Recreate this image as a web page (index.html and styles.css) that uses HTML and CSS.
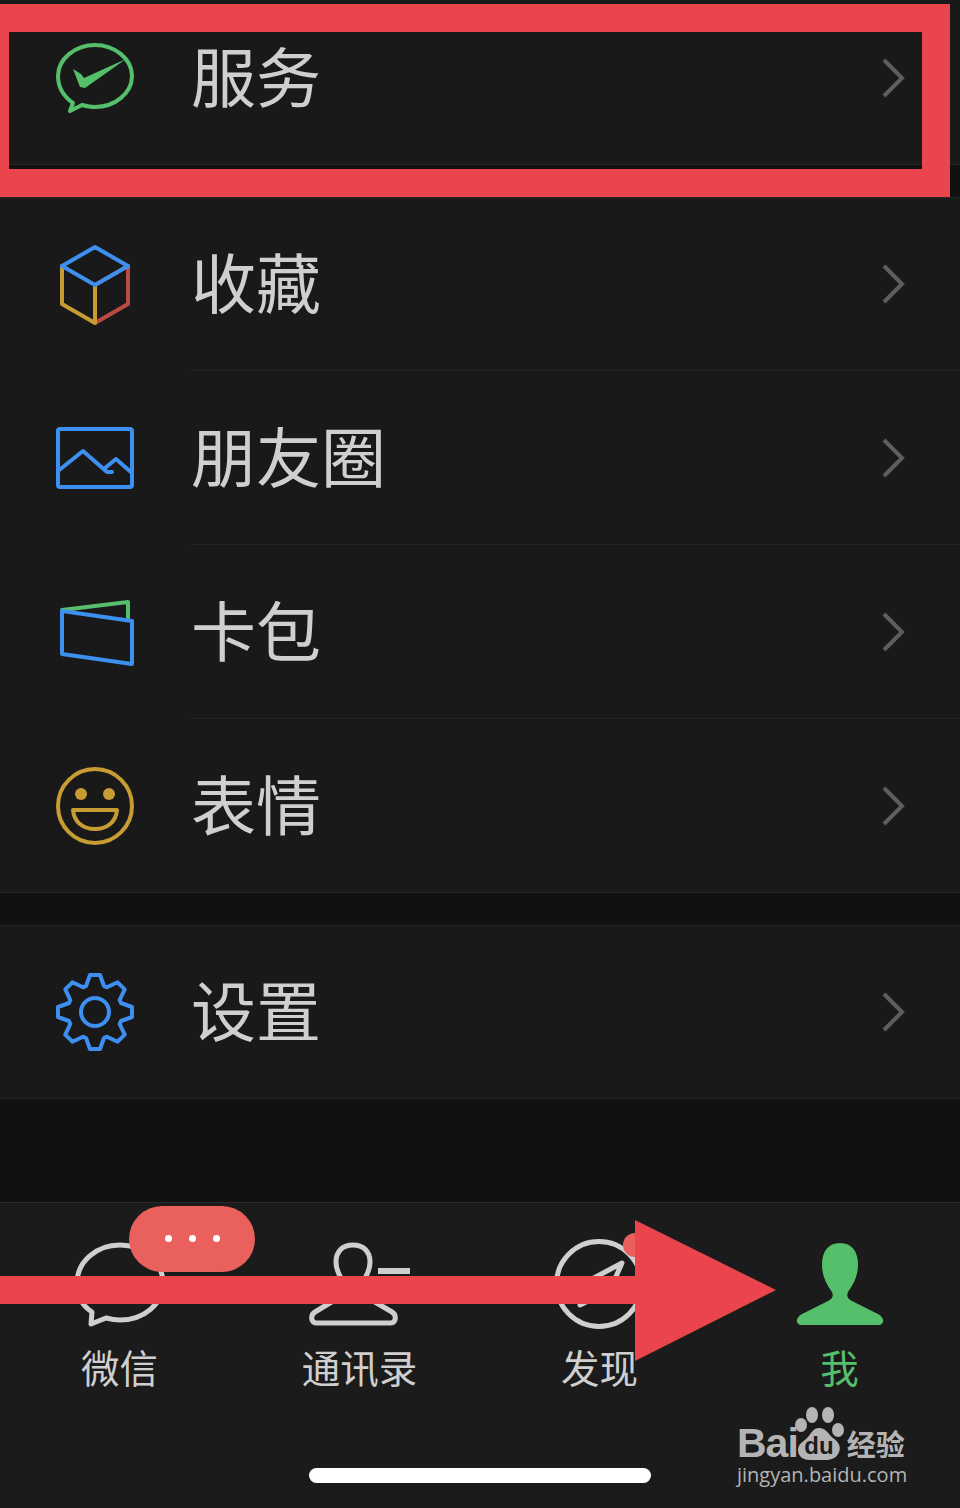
FILE: index.html
```html
<!DOCTYPE html>
<html lang="zh-CN">
<head>
  <meta charset="UTF-8">
  <title>我</title>
  <link rel="stylesheet" href="styles.css">
</head>
<body>

  <div class="screen">
    <div class="list">

      <div class="group first">
        <div class="row">
          <svg class="row-icon" viewBox="56 39 78 78">
            <path class="green-line" d="M73 103C63 96 58 87 58 76C58 59 75 45 95 45C115 45 132 59 132 76C132 93 115 107 95 107C90 107 86 106 82 105L70 111Z"/>
            <path class="green-fill" d="M73 69L81 74L84 78L126 59L85 88L80 87Z"/>
          </svg>
          <div class="row-body">
            <span class="row-text">服务</span>
            <svg class="chevron" viewBox="0 0 24 42"><path d="M2 3L20 21L2 39"/></svg>
          </div>
        </div>
      </div>

      <div class="group">
        <div class="row">
          <svg class="row-icon" viewBox="56 245 78 78">
            <path class="cube" stroke="#bb4a44" d="M95 285L128 266V304L95 323"/>
            <path class="cube" stroke="#c69c33" d="M62 266V304L95 323V285"/>
            <path class="cube" stroke="#3d8ff0" d="M62 266L95 247L128 266L95 285Z"/>
          </svg>
          <div class="row-body">
            <span class="row-text">收藏</span>
            <svg class="chevron" viewBox="0 0 24 42"><path d="M2 3L20 21L2 39"/></svg>
          </div>
        </div>
        <div class="row">
          <svg class="row-icon" viewBox="56 419 78 78">
            <path class="blue-line" d="M60 429H130Q132 429 132 431V485Q132 487 130 487H60Q58 487 58 485V431Q58 429 60 429Z"/>
            <path class="blue-line" d="M58 471L83 451L107 472H112M105 468L116 459L132 473"/>
          </svg>
          <div class="row-body">
            <span class="row-text">朋友圈</span>
            <svg class="chevron" viewBox="0 0 24 42"><path d="M2 3L20 21L2 39"/></svg>
          </div>
        </div>
        <div class="row">
          <svg class="row-icon" viewBox="56 593 78 78">
            <path class="cube" stroke="#55bf6c" d="M62 610L128 602V618"/>
            <path class="blue-line" d="M62 611L132 621V664L62 654Z"/>
          </svg>
          <div class="row-body">
            <span class="row-text">卡包</span>
            <svg class="chevron" viewBox="0 0 24 42"><path d="M2 3L20 21L2 39"/></svg>
          </div>
        </div>
        <div class="row">
          <svg class="row-icon" viewBox="56 767 78 78">
            <circle class="yellow-line" cx="95" cy="806" r="37"/>
            <circle class="yellow-fill" cx="81" cy="794" r="6"/>
            <circle class="yellow-fill" cx="109" cy="794" r="6"/>
            <path class="yellow-line" d="M73 810H117C116 822 107 829 95 829C83 829 74 822 73 810Z"/>
          </svg>
          <div class="row-body last">
            <span class="row-text">表情</span>
            <svg class="chevron" viewBox="0 0 24 42"><path d="M2 3L20 21L2 39"/></svg>
          </div>
        </div>
      </div>

      <div class="group">
        <div class="row">
          <svg class="row-icon" viewBox="-39 -39 78 78">
            <path class="blue-line" d="M-9 -26L-5 -37H5L9 -26L12 -24.7L22.6 -29.7L29.7 -22.6L24.7 -12L26 -9L37 -5V5L26 9L24.7 12L29.7 22.6L22.6 29.7L12 24.7L9 26L5 37H-5L-9 26L-12 24.7L-22.6 29.7L-29.7 22.6L-24.7 12L-26 9L-37 5V-5L-26 -9L-24.7 -12L-29.7 -22.6L-22.6 -29.7L-12 -24.7Z"/>
            <circle class="blue-line" cx="0" cy="0" r="14"/>
          </svg>
          <div class="row-body last">
            <span class="row-text">设置</span>
            <svg class="chevron" viewBox="0 0 24 42"><path d="M2 3L20 21L2 39"/></svg>
          </div>
        </div>
      </div>

    </div>

    <div class="tabbar">
      <div class="tabs">
        <div class="tab">
          <svg class="tab-icon" viewBox="60 1243 120 84">
            <path class="tab-line" d="M92 1312C81 1305 77 1295 77 1283C77 1262 96 1245 120 1245C144 1245 163 1262 163 1283C163 1304 144 1320 120 1320C115 1320 110 1319 106 1318L91 1324Z"/>
          </svg>
          <span class="tab-text">微信</span>
          <div class="more"><i></i><i></i><i></i></div>
        </div>
        <div class="tab">
          <svg class="tab-icon" viewBox="300 1243 120 84">
            <path class="tab-line" d="M343 1281C338 1274 336 1268 336 1262C336 1251 343 1245 353 1245C363 1245 370 1251 370 1262C370 1268 368 1274 363 1281V1295L392 1312C397 1315 396 1323 391 1323H316C311 1323 310 1315 315 1312L343 1295Z"/>
            <path class="tab-bar-mark" d="M378 1268H410V1274H378Z"/>
          </svg>
          <span class="tab-text">通讯录</span>
        </div>
        <div class="tab">
          <svg class="tab-icon" viewBox="540 1243 120 84">
            <circle class="tab-line" cx="599" cy="1284" r="42.5"/>
            <path class="tab-line" d="M622 1263L590 1280L580 1305L610 1290Z"/>
          </svg>
          <span class="tab-text">发现</span>
          <div class="dot"></div>
        </div>
        <div class="tab active">
          <svg class="tab-icon" viewBox="780 1243 120 84">
            <path class="green-fill" d="M840 1243C828 1243 822 1252 822 1264C822 1278 828 1286 832 1292C834 1296 832 1299 828 1301L802 1314C795 1318 795 1325 802 1325H878C885 1325 885 1318 878 1314L852 1301C848 1299 846 1296 848 1292C852 1286 858 1278 858 1264C858 1252 852 1243 840 1243Z"/>
          </svg>
          <span class="tab-text">我</span>
        </div>
      </div>
      <div class="home-bar"></div>

      <div class="watermark">
        <div class="wm-top">
          <span class="wm-bai">Bai</span>
          <svg class="wm-paw" viewBox="0 0 50 56">
            <ellipse cx="6" cy="19" rx="6" ry="7"/>
            <ellipse cx="17" cy="9" rx="6" ry="8"/>
            <ellipse cx="33" cy="9" rx="6" ry="8"/>
            <ellipse cx="43" cy="24" rx="6" ry="7"/>
            <path d="M24 22C31 22 33 28 38 32C44 36 46 41 44 46C42 52 36 54 31 54H15C9 54 3 51 3 44C3 38 8 36 12 32C16 28 18 22 24 22Z"/>
            <text x="24" y="48" text-anchor="middle">du</text>
          </svg>
          <span class="wm-name">经验</span>
        </div>
        <div class="wm-url">jingyan.baidu.com</div>
      </div>
    </div>

    <!-- red marks drawn on top of the screenshot -->
    <div class="mark-frame"></div>
    <svg class="mark-arrow" viewBox="0 0 776 141">
      <path d="M0 56H635V0L776 70L635 141V84H0Z"/>
    </svg>
  </div>

</body>
</html>
```

FILE: styles.css
```css
* {
  box-sizing: border-box;
}

body {
  margin: 0;
  background: #111;
  font-family: "Noto Sans CJK SC", "Liberation Sans", sans-serif;
}

.screen {
  position: relative;
  width: 960px;
  height: 1508px;
  overflow: hidden;
  background: #111;
  display: flex;
  flex-direction: column;
}

.list {
  flex: 1;
}

.group {
  background: #191919;
  margin-bottom: 32px;
  box-shadow: inset 0 1px 0 #242424, inset 0 -1px 0 #242424;
}

.group.first {
  margin-top: -9px;
}

.row {
  display: flex;
  align-items: center;
  height: 174px;
  padding-left: 56px;
}

.row-icon {
  width: 78px;
  height: 78px;
  flex-shrink: 0;
  overflow: visible;
}

.row-body {
  flex: 1;
  height: 100%;
  margin-left: 56px;
  padding-left: 1px;
  padding-right: 54px;
  display: flex;
  align-items: center;
  justify-content: space-between;
  border-bottom: 1px solid #242424;
}

.row-body.last,
.first .row-body {
  border-bottom: none;
}

.row-text {
  font-size: 65px;
  line-height: 80px;
  padding-bottom: 8px;
  color: #cfcfcf;
}

.chevron {
  width: 24px;
  height: 42px;
  fill: none;
  stroke: #5e5e5e;
  stroke-width: 4;
}

.green-line,
.blue-line,
.yellow-line,
.cube {
  fill: none;
  stroke-width: 4;
  stroke-linejoin: round;
  stroke-linecap: round;
}

.green-line { stroke: #55bf6c; }
.blue-line { stroke: #3d8ff0; }
.yellow-line { stroke: #c69c33; }
.green-fill { fill: #55bf6c; }
.yellow-fill { fill: #c69c33; }

.tabbar {
  position: relative;
  height: 306px;
  background: #1b1b1b;
  border-top: 1px solid #282828;
  display: flex;
  flex-direction: column;
  align-items: center;
}

.tabs {
  width: 100%;
  display: flex;
  padding-top: 40px;
}

.tab {
  position: relative;
  flex: 1;
  display: flex;
  flex-direction: column;
  align-items: center;
}

.tab-icon {
  width: 120px;
  height: 84px;
  overflow: visible;
}

.tab-line {
  fill: none;
  stroke: #cfcfcf;
  stroke-width: 5;
  stroke-linejoin: round;
}

.tab-bar-mark {
  fill: #cfcfcf;
}

.tab-text {
  margin-top: 14px;
  margin-right: 1px;
  font-size: 38.5px;
  line-height: 50px;
  color: #cfcfcf;
}

.tab.active .tab-text {
  color: #55bf6c;
}

.more {
  position: absolute;
  left: 129px;
  top: -37px;
  width: 126px;
  height: 66px;
  border-radius: 33px;
  background: #e9605c;
  display: flex;
  align-items: center;
  justify-content: center;
  gap: 17px;
  padding-bottom: 2px;
}

.more i {
  width: 7px;
  height: 7px;
  border-radius: 50%;
  background: #fff;
}

.dot {
  position: absolute;
  left: 143px;
  top: -10px;
  width: 24px;
  height: 24px;
  border-radius: 50%;
  background: #e9605c;
}

.home-bar {
  width: 342px;
  height: 15px;
  margin-top: 77px;
  border-radius: 8px;
  background: #fff;
}

.watermark {
  position: absolute;
  left: 737px;
  top: 203px;
  width: 172px;
  color: #b4b4b4;
}

.wm-top {
  display: flex;
  align-items: flex-end;
  height: 56px;
}

.wm-bai {
  font-family: "Liberation Sans", sans-serif;
  font-size: 41px;
  line-height: 38px;
  font-weight: 700;
  letter-spacing: -1px;
}

.wm-paw {
  width: 50px;
  height: 56px;
  margin-left: -3px;
  fill: #b4b4b4;
}

.wm-paw text {
  font-family: "Liberation Sans", sans-serif;
  font-size: 24px;
  font-weight: 700;
  fill: #1b1b1b;
}

.wm-name {
  margin-left: 2px;
  font-size: 29px;
  line-height: 38px;
  font-weight: 700;
}

.wm-url {
  font-family: "Open Sans", sans-serif;
  font-size: 20px;
  line-height: 26px;
}

.mark-frame {
  position: absolute;
  left: -19px;
  top: 4px;
  width: 969px;
  height: 193px;
  border: 28px solid #ea454c;
}

.mark-arrow {
  position: absolute;
  left: 0;
  top: 1220px;
  width: 776px;
  height: 141px;
  fill: #ea454c;
}
```
